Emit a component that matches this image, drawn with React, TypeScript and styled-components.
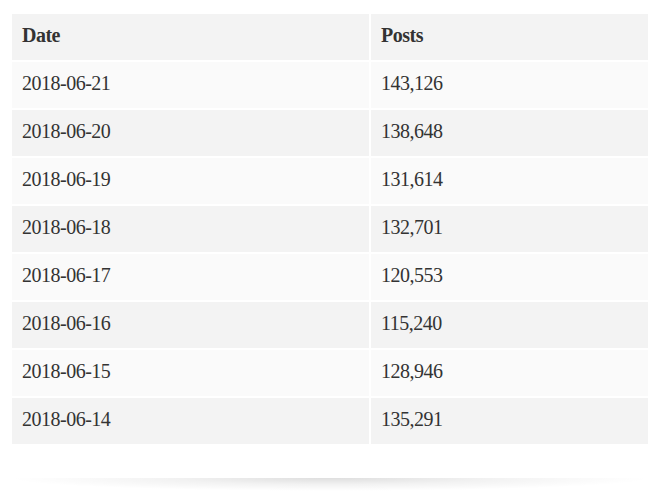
import React from "react";
import styled, { createGlobalStyle } from "styled-components";

const GlobalStyle = createGlobalStyle`
  html, body { margin: 0; padding: 0; background: #ffffff; }
  body { font-family: "Liberation Serif", "Times New Roman", serif; }
`;

const Page = styled.div`
  width: 640px;
  padding: 12px 0 0 10px;
`;

const Card = styled.div`
  padding-bottom: 32px;
  background: #ffffff;
`;

const Shadow = styled.div`
  height: 13px;
  background: radial-gradient(
    ellipse farthest-side at 50% 0%,
    rgba(0, 0, 0, 0.13) 0%,
    rgba(0, 0, 0, 0.05) 50%,
    rgba(0, 0, 0, 0) 100%
  );
`;

const Table = styled.table`
  width: 640px;
  border-collapse: separate;
  border-spacing: 2px;
  margin: 0;
  color: #333333;
  font-family: "Liberation Serif", "Times New Roman", serif;
  font-size: 20px;
  letter-spacing: -0.5px;
`;

const HeadCell = styled.th<{ $w?: number }>`
  width: ${(p) => (p.$w ? `${p.$w}px` : "auto")};
  height: 46px;
  padding: 0 10px 4px;
  box-sizing: border-box;
  text-align: left;
  font-weight: 700;
  background: #f3f3f3;
  vertical-align: middle;
`;

const Row = styled.tr<{ $alt: boolean }>`
  background: ${(p) => (p.$alt ? "#f3f3f3" : "#fafafa")};
`;

const Cell = styled.td`
  height: 46px;
  padding: 0 10px 4px;
  box-sizing: border-box;
  vertical-align: middle;
  font-weight: 400;
`;

const data: [string, string][] = [
  ["2018-06-21", "143,126"],
  ["2018-06-20", "138,648"],
  ["2018-06-19", "131,614"],
  ["2018-06-18", "132,701"],
  ["2018-06-17", "120,553"],
  ["2018-06-16", "115,240"],
  ["2018-06-15", "128,946"],
  ["2018-06-14", "135,291"],
];

export default function App() {
  return (
    <>
      <GlobalStyle />
      <Page>
        <Card>
          <Table>
            <thead>
              <tr>
                <HeadCell $w={357}>Date</HeadCell>
                <HeadCell>Posts</HeadCell>
              </tr>
            </thead>
            <tbody>
              {data.map(([d, p], i) => (
                <Row key={d} $alt={i % 2 === 1}>
                  <Cell>{d}</Cell>
                  <Cell>{p}</Cell>
                </Row>
              ))}
            </tbody>
          </Table>
        </Card>
        <Shadow />
      </Page>
    </>
  );
}
